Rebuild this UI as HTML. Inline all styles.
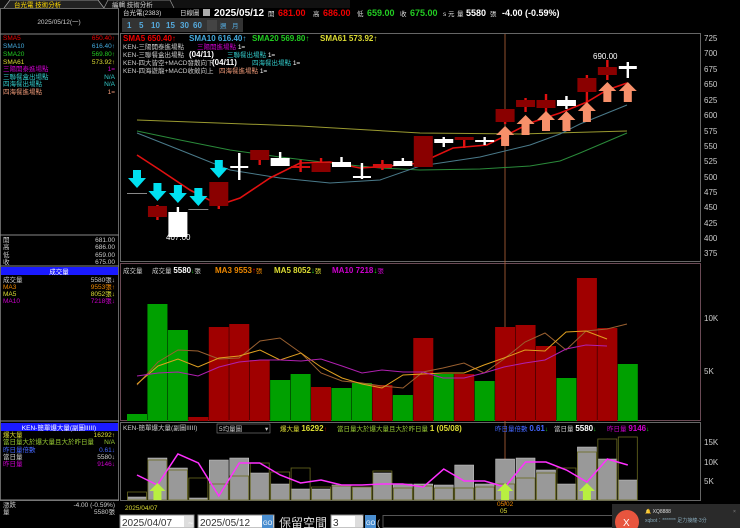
<!DOCTYPE html>
<html><head><meta charset="utf-8">
<style>
html,body{margin:0;padding:0;background:#000;width:740px;height:528px;overflow:hidden}
svg{display:block}
text{font-family:"Liberation Sans","Noto Sans CJK TC",sans-serif}
.s{font-size:6.5px}
.b{font-size:9px;font-weight:bold}
</style></head>
<body>
<svg id="c" width="740" height="528" viewBox="0 0 740 528" xmlns="http://www.w3.org/2000/svg">
<rect width="740" height="528" fill="#000"/>
<rect x="0" y="0" width="350" height="8" fill="#111"/>
<path d="M4 8 L10 0 L98 0 L104 8" fill="#222" stroke="#aaa" stroke-width="0.7"/>
<text x="14" y="7" class="s" fill="#ffd800">台光電 技術分析</text>
<path d="M104 8 L108 0 L170 0 L174 8" fill="#111" stroke="#999" stroke-width="0.7"/>
<text x="112" y="7" class="s" fill="#ccc">編輯 技術分析</text>
<rect x="0.5" y="8.5" width="118" height="492" fill="none" stroke="#666"/>
<text x="59" y="24" class="s" fill="#ccc" text-anchor="middle">2025/05/12(一)</text>
<line x1="0" y1="34" x2="119" y2="34" stroke="#888"/>
<g class="s">
<text x="3" y="40" fill="#e00">SMA5</text><text x="115" y="40" fill="#e00" text-anchor="end">650.40↑</text>
<text x="3" y="48" fill="#4ad">SMA10</text><text x="115" y="48" fill="#4ad" text-anchor="end">616.40↑</text>
<text x="3" y="56" fill="#2c2">SMA20</text><text x="115" y="56" fill="#2c2" text-anchor="end">569.80↑</text>
<text x="3" y="64" fill="#dd3">SMA61</text><text x="115" y="64" fill="#dd3" text-anchor="end">573.92↑</text>
<text x="3" y="71" fill="#c0c">三陽開泰進場點</text><text x="115" y="71" fill="#c0c" text-anchor="end">1=</text>
<text x="3" y="79" fill="#3cc">三聯餐盒出場點</text><text x="115" y="79" fill="#3cc" text-anchor="end">N/A</text>
<text x="3" y="86" fill="#3cc">四海餐出場點</text><text x="115" y="86" fill="#3cc" text-anchor="end">N/A</text>
<text x="3" y="94" fill="#e97">四海餐進場點</text><text x="115" y="94" fill="#e97" text-anchor="end">1=</text>
</g>
<line x1="0" y1="235" x2="119" y2="235" stroke="#888"/>
<g class="s" fill="#ccc">
<text x="3" y="242">開</text><text x="115" y="242" text-anchor="end">681.00</text>
<text x="3" y="249">高</text><text x="115" y="249" text-anchor="end">686.00</text>
<text x="3" y="257">低</text><text x="115" y="257" text-anchor="end">659.00</text>
<text x="3" y="264">收</text><text x="115" y="264" text-anchor="end">675.00</text>
</g>
<line x1="0" y1="266" x2="119" y2="266" stroke="#888"/>
<rect x="1" y="267" width="117" height="8" fill="#1a1aff"/>
<text x="59" y="274" class="s" fill="#fff" text-anchor="middle">成交量</text>
<g class="s">
<text x="3" y="282" fill="#ccc">成交量</text><text x="115" y="282" fill="#ccc" text-anchor="end">5580張↓</text>
<text x="3" y="289" fill="#e80">MA3</text><text x="115" y="289" fill="#e80" text-anchor="end">9553張↑</text>
<text x="3" y="296" fill="#dd3">MA5</text><text x="115" y="296" fill="#dd3" text-anchor="end">8052張↓</text>
<text x="3" y="303" fill="#c0c">MA10</text><text x="115" y="303" fill="#c0c" text-anchor="end">7218張↓</text>
</g>
<line x1="0" y1="421" x2="119" y2="421" stroke="#888"/>
<rect x="1" y="423" width="117" height="8" fill="#1a1aff"/>
<text x="59" y="430" class="s" fill="#fff" text-anchor="middle">KEN-簡單爆大量(副圖IIIII)</text>
<g class="s">
<text x="3" y="437" fill="#dd3">爆大量</text><text x="115" y="437" fill="#dd3" text-anchor="end">16292↑</text>
<text x="3" y="444" fill="#9c3">當日量大於爆大量且大於昨日量</text><text x="115" y="444" fill="#9c3" text-anchor="end">N/A</text>
<text x="3" y="452" fill="#46f">昨日量倍數</text><text x="115" y="452" fill="#46f" text-anchor="end">0.61↓</text>
<text x="3" y="459" fill="#ccc">當日量</text><text x="115" y="459" fill="#ccc" text-anchor="end">5580↓</text>
<text x="3" y="466" fill="#c0c">昨日量</text><text x="115" y="466" fill="#c0c" text-anchor="end">9146↓</text>
</g>
<line x1="0" y1="500" x2="119" y2="500" stroke="#888"/>
<g class="s" fill="#ccc">
<text x="3" y="507">漲跌</text><text x="115" y="507" text-anchor="end">-4.00 (-0.59%)</text>
<text x="3" y="514">量</text><text x="115" y="514" text-anchor="end">5580張</text>
</g>

<text x="123" y="15" class="s" fill="#ddd">台光電(2383)</text>
<text x="180" y="15" class="s" fill="#ddd">日線圖</text>
<rect x="203" y="9" width="7" height="7" fill="#aaa"/>
<text x="214" y="16" class="b" fill="#fff" style="font-size:10px">2025/05/12</text>
<text x="268" y="16" class="s" fill="#ddd">開</text><text x="278" y="16" class="b" fill="#e00">681.00</text>
<text x="313" y="16" class="s" fill="#ddd">高</text><text x="323" y="16" class="b" fill="#e00">686.00</text>
<text x="357" y="16" class="s" fill="#ddd">低</text><text x="367" y="16" class="b" fill="#2c2">659.00</text>
<text x="400" y="16" class="s" fill="#ddd">收</text><text x="410" y="16" class="b" fill="#2c2">675.00</text>
<text x="443" y="16" class="s" fill="#ddd">s 元</text>
<text x="457" y="16" class="s" fill="#ddd">量</text><text x="466" y="16" class="b" fill="#fff">5580</text><text x="490" y="16" class="s" fill="#ddd">張</text>
<text x="502" y="16" class="b" fill="#fff">-4.00 (-0.59%)</text>
<rect x="122" y="18" width="121" height="14" fill="#333"/>
<g class="b" fill="#5ad" style="font-size:8px">
<text x="127" y="28">1</text><text x="139" y="28">5</text><text x="151" y="28">10</text><text x="166" y="28">15</text><text x="180" y="28">30</text><text x="193" y="28">60</text>
</g>
<rect x="207" y="20" width="10" height="11" fill="#444"/>
<text x="220" y="28" class="s" fill="#5ad">週</text><text x="232" y="28" class="s" fill="#5ad">月</text>

<rect x="120.5" y="33.5" width="580" height="228" fill="none" stroke="#666"/>
<rect x="120.5" y="263.5" width="580" height="157" fill="none" stroke="#6a4a55"/>
<rect x="120.5" y="422.5" width="580" height="78" fill="none" stroke="#666"/>
<line x1="505" y1="34" x2="505" y2="505" stroke="#b5653a" stroke-width="0.8"/>

<text x="123" y="41" class="b" fill="#e00" style="font-size:8px">SMA5 650.40↑</text>
<text x="189" y="41" class="b" fill="#4ad" style="font-size:8px">SMA10 616.40↑</text>
<text x="252" y="41" class="b" fill="#2c2" style="font-size:8px">SMA20 569.80↑</text>
<text x="320" y="41" class="b" fill="#dd3" style="font-size:8px">SMA61 573.92↑</text>
<g class="s">
<text x="123" y="49" fill="#ccc">KEN-三陽開泰進場點</text><text x="197" y="49" fill="#c0c">三陽開進場點 <tspan fill="#fff">1=</tspan></text>
<text x="123" y="57" fill="#ccc">KEN-三聯餐盒出場點</text><text x="189" y="57" class="b" fill="#fff" style="font-size:8px">(04/11)</text><text x="227" y="57" fill="#3cc">三聯餐出場點 <tspan fill="#fff">1=</tspan></text>
<text x="123" y="65" fill="#ccc">KEN-四大皆空+MACD發散向下</text><text x="212" y="65" class="b" fill="#fff" style="font-size:8px">(04/11)</text><text x="252" y="65" fill="#3cc">四海餐出場點 <tspan fill="#fff">1=</tspan></text>
<text x="123" y="73" fill="#ccc">KEN-四海遊龍+MACD收斂向上</text><text x="219" y="73" fill="#e97">四海餐進場點 <tspan fill="#fff">1=</tspan></text>
</g>
<g fill="#ccc" style="font-size:8px">
<text x="704" y="41">725</text><text x="704" y="56">700</text><text x="704" y="72">675</text><text x="704" y="87">650</text><text x="704" y="103">625</text><text x="704" y="118">600</text><text x="704" y="134">575</text><text x="704" y="149">550</text><text x="704" y="164">525</text><text x="704" y="180">500</text><text x="704" y="195">475</text><text x="704" y="210">450</text><text x="704" y="226">425</text><text x="704" y="241">400</text><text x="704" y="256">375</text>
<text x="704" y="321">10K</text><text x="704" y="374">5K</text>
<text x="704" y="445">15K</text><text x="704" y="465">10K</text><text x="704" y="484">5K</text>
</g>
<text x="166" y="240" fill="#fff" style="font-size:8px">407.00</text>
<text x="593" y="59" fill="#fff" style="font-size:8px">690.00</text>

<g class="s">
<text x="123" y="273" fill="#ccc">成交量</text><text x="152" y="273" fill="#ccc">成交量 <tspan class="b" fill="#fff" style="font-size:8px">5580</tspan><tspan fill="#2c2">↓</tspan>張</text>
<text x="215" y="273" fill="#e80" class="b" style="font-size:8px">MA3 9553<tspan fill="#e00">↑</tspan><tspan class="s" style="font-weight:normal">張</tspan></text>
<text x="274" y="273" fill="#dd3" class="b" style="font-size:8px">MA5 8052<tspan fill="#2c2">↓</tspan><tspan class="s" style="font-weight:normal">張</tspan></text>
<text x="332" y="273" fill="#c0c" class="b" style="font-size:8px">MA10 7218<tspan fill="#2c2">↓</tspan><tspan class="s" style="font-weight:normal">張</tspan></text>
</g>
<g class="s">
<text x="123" y="430" fill="#ccc">KEN-簡單爆大量(副圖IIIII)</text>
<rect x="217" y="424" width="53" height="9" fill="#000" stroke="#888" stroke-width="0.6"/>
<text x="219" y="431" fill="#ccc">5均量圖</text><text x="265" y="431" fill="#ccc">▾</text>
<text x="280" y="431" fill="#dd3">爆大量 <tspan class="b" style="font-size:8px">16292</tspan><tspan fill="#e00">↑</tspan></text>
<text x="337" y="431" fill="#9c3">當日量大於爆大量且大於昨日量 <tspan class="b" fill="#dd3" style="font-size:8px">1   (05/08)</tspan></text>
<text x="495" y="431" fill="#46f">昨日量倍數 <tspan class="b" style="font-size:8px">0.61</tspan><tspan fill="#2c2">↓</tspan></text>
<text x="554" y="431" fill="#ccc">當日量 <tspan class="b" fill="#fff" style="font-size:8px">5580</tspan><tspan fill="#2c2">↓</tspan></text>
<text x="607" y="431" fill="#c0c">昨日量 <tspan class="b" style="font-size:8px">9146</tspan><tspan fill="#2c2">↓</tspan></text>
</g>
<g id="g"></g>
<text x="125" y="510" class="s" fill="#dd3">2025/04/07</text>
<text x="497" y="506" class="s" fill="#e80">05/02</text>
<text x="500" y="513" class="s" fill="#dd3">05</text>

<rect x="120" y="515" width="74" height="13" fill="#fff" stroke="#888"/>
<text x="122" y="526" fill="#333" style="font-size:10px">2025/04/07</text>
<rect x="184" y="516" width="9" height="11" fill="#ddd"/>
<text x="188" y="526" fill="#fff" style="font-size:9px">~</text>
<rect x="198" y="515" width="76" height="13" fill="#fff" stroke="#888"/>
<text x="200" y="526" fill="#333" style="font-size:10px">2025/05/12</text>
<rect x="262" y="515" width="11" height="13" fill="#4a8ed0"/><text x="263" y="525" fill="#fff" style="font-size:6px">GO</text>
<text x="279" y="527" fill="#ddd" style="font-size:12px">保留空間</text>
<rect x="331" y="515" width="32" height="13" fill="#fff" stroke="#888"/>
<text x="333" y="526" fill="#333" style="font-size:10px">3</text>
<rect x="355" y="516" width="8" height="11" fill="#ddd"/>
<rect x="365" y="515" width="11" height="13" fill="#4a8ed0"/><text x="366" y="525" fill="#fff" style="font-size:6px">GO</text>
<text x="377" y="526" fill="#ccc" style="font-size:9px">(</text>
<rect x="383" y="515.5" width="230" height="12" fill="#000" stroke="#555"/>
<rect x="612" y="504" width="128" height="24" fill="#2a2a2a"/>
<circle cx="627" cy="522" r="12" fill="#e8553e"/>
<text x="623" y="526" fill="#fff" style="font-size:10px">X</text>
<text x="645" y="513" fill="#ddd" style="font-size:5px">🔔 XQ8888</text>
<text x="645" y="522" fill="#8ab" style="font-size:5px">xqbot：******* 足力接龍-3分</text>
<text x="733" y="513" fill="#888" style="font-size:5px">×</text>
</svg>
<script>
const NS="http://www.w3.org/2000/svg",g=document.getElementById('g');
function el(t,a){const e=document.createElementNS(NS,t);for(const k in a)e.setAttribute(k,a[k]);g.appendChild(e);return e;}
const cx=i=>137+i*20.45;
function line(pts,c,w){el('polyline',{points:pts.map(p=>p.join(',')).join(' '),fill:'none',stroke:c,'stroke-width':w||1});}
line([[137,120],[300,126],[420,133],[520,134],[627,131]],'#9a9a30');
line([[137,131],[180,140],[230,150],[280,157],[330,163],[380,168],[420,170],[480,169],[530,166],[560,161],[580,153],[627,133]],'#2a8a3a');
line([[137,133],[180,150],[230,170],[280,178],[330,183],[380,180],[420,166],[480,157],[530,145],[560,134],[580,124],[627,105]],'#4a7a8a');
line([[137,155],[160,170],[190,190],[219,205],[240,198],[270,178],[300,163],[330,162],[360,168],[390,166],[420,163],[453,148],[487,145],[503,137],[530,123],[560,113],[587,102],[607,90],[627,83]],'#e01010',1.6);
const C=[[0,'g',193,193,193,193],[1,'d',206,217,205,220],[2,'w',212,237,207,237],[3,'g',209,209,209,209],[4,'d',182,206,182,209],
[5,'x',166,168,153,180],[6,'d',150,160,150,165],[7,'w',158,166,152,166],[8,'r',166,168,160,172],[9,'d',163,172,158,172],
[10,'w',162,167,157,167],[11,'x',176,178,163,179],[12,'r',164,168,160,170],[13,'w',161,166,158,166],[14,'d',136,167,136,167],
[15,'w',139,143,137,147],[16,'d',137,140,137,148],[17,'w',140,142,137,145],[18,'d',109,122,109,124],[19,'d',100,107,98,112],
[20,'d',100,108,94,113],[21,'w',100,106,96,109],[22,'d',78,92,75,104],[23,'d',67,75,60,80],[24,'x',66,69,62,78]];
C.forEach(([i,t,a,b,wa,wb])=>{const x=cx(i);
 if(t=='g'){el('rect',{x:x-10,y:a,width:20,height:1,fill:'#888'});return;}
 const col=t=='d'?'#8a0000':t=='r'?'#d01010':'#fff';
 const wc=t=='d'||t=='r'?'#e01010':'#fff';
 el('rect',{x:x-1.2,y:wa,width:2.4,height:wb-wa,fill:wc});
 if(t=='x'){el('rect',{x:x-9,y:a,width:18,height:Math.max(2,b-a),fill:'#fff'});}
 else el('rect',{x:x-9.5,y:a,width:19,height:Math.max(2,b-a),fill:col});
});
[[0,170],[1,183],[2,185],[3,188],[4,160]].forEach(([i,y])=>{const x=cx(i);
 el('path',{d:`M${x-4} ${y} h8 v8 h5 l-9 10 l-9 -10 h5 z`,fill:'#00e0f0'});});
[[18,126],[19,115],[20,111],[21,111],[22,102],[23,82],[24,82]].forEach(([i,y])=>{const x=cx(i);
 el('path',{d:`M${x} ${y} l9 9 h-5 v11 h-8 v-11 h-5 z`,fill:'#f7906a'});});
const V=[[414,'g'],[304,'g'],[330,'g'],[417,'r'],[327,'r'],[324,'r'],[360,'r'],[380,'g'],[374,'g'],[387,'r'],[388,'g'],[383,'g'],[385,'r'],[395,'g'],[338,'r'],[374,'g'],[374,'r'],[381,'g'],[327,'r'],[325,'r'],[346,'r'],[378,'g'],[278,'r'],[328,'r'],[364,'g']];
V.forEach(([t,c],i)=>{const x=cx(i);el('rect',{x:x-10,y:t,width:20,height:421-t,fill:c=='g'?'#00a000':'#a00000'});});
line([[137,385],[158,362],[178,350],[198,351],[219,359],[239,358],[260,341],[280,338],[301,353],[321,373],[342,381],[362,383],[382,386],[403,388],[423,372],[443,368],[464,363],[484,373],[504,359],[525,342],[545,333],[566,350],[586,331],[607,329],[627,324]],'#9a6030');
line([[137,384],[158,366],[178,359],[198,367],[219,358],[239,356],[260,350],[280,360],[301,353],[321,367],[342,378],[362,384],[382,388],[403,375],[423,374],[443,373],[464,373],[484,365],[504,358],[525,350],[545,351],[566,332],[586,331],[607,339]],'#e0a020');
line([[137,376],[158,373],[178,372],[198,376],[219,367],[239,362],[260,360],[280,360],[301,361],[321,359],[342,366],[362,373],[382,370],[403,372],[423,372],[443,378],[464,378],[484,373],[504,367],[525,363],[545,360],[566,349],[586,345],[607,346]],'#b020b0');
const O=[492,460,470,478,484,476,463,472,468,487,486,487,471,488,486,488,488,487,484,478,473,468,452,439,437];
const G=[497,458,468,498,460,458,473,484,489,489,485,487,473,484,484,485,465,484,459,458,470,484,447,459,480];
O.forEach((t,i)=>{const x=cx(i);
 el('rect',{x:x-9.5,y:G[i],width:19,height:500-G[i],fill:'#999',stroke:'#ccc','stroke-width':0.5});
 el('rect',{x:x-9.5,y:t,width:19,height:500-t,fill:'none',stroke:'#6a6a20','stroke-width':0.8});});
const M=[475,485,454,463,496,463,463,475,483,480,485,485,484,484,487,469,481,481,487,462,462,470,482,459,465];
line(M.map((y,i)=>[cx(i),y]),'#ff30ff',1.5);
[1,18,22].forEach(i=>{const x=cx(i);el('path',{d:`M${x} 483 l8 8 h-4 v9 h-8 v-9 h-4 z`,fill:'#b8f040'});});
</script>
</body></html>
